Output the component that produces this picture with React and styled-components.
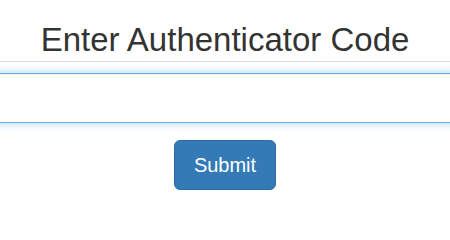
import styled, { createGlobalStyle } from "styled-components";

const GlobalStyle = createGlobalStyle`
  html, body {
    margin: 0;
    padding: 0;
    background: #fff;
    overflow: hidden;
  }
  body {
    font-family: "Liberation Sans", Arial, sans-serif;
    color: #333;
  }
`;

const Page = styled.div`
  display: flex;
  flex-direction: column;
  align-items: center;
  width: 100%;
`;

const Header = styled.div`
  width: 100%;
  padding: 22px 0 3px;
  border-bottom: 1px solid #dedede;
  text-align: center;
`;

const Title = styled.h2`
  margin: 0;
  font-size: 33px;
  font-weight: 400;
  line-height: 36px;
  color: #333;
`;

const CodeInput = styled.input`
  box-sizing: border-box;
  display: block;
  width: calc(100% + 20px);
  height: 50px;
  margin: 11px -10px 0;
  padding: 10px 16px;
  font-family: inherit;
  font-size: 18px;
  color: #555;
  background: #fff;
  border: 1px solid #66afe9;
  border-radius: 6px;
  outline: none;
  box-shadow: inset 0 1px 1px rgba(0, 0, 0, 0.075),
    0 0 8px rgba(102, 175, 233, 0.6);
`;

const SubmitButton = styled.button`
  box-sizing: border-box;
  margin-top: 17px;
  padding: 11px 19px;
  font-family: inherit;
  font-size: 20px;
  line-height: 26px;
  color: #fff;
  background: #337ab7;
  border: 1px solid #2e6da4;
  border-radius: 6px;
  cursor: pointer;
`;

export default function App() {
  return (
    <Page>
      <GlobalStyle />
      <Header>
        <Title>Enter Authenticator Code</Title>
      </Header>
      <CodeInput type="text" aria-label="Authenticator code" />
      <SubmitButton type="submit">Submit</SubmitButton>
    </Page>
  );
}
